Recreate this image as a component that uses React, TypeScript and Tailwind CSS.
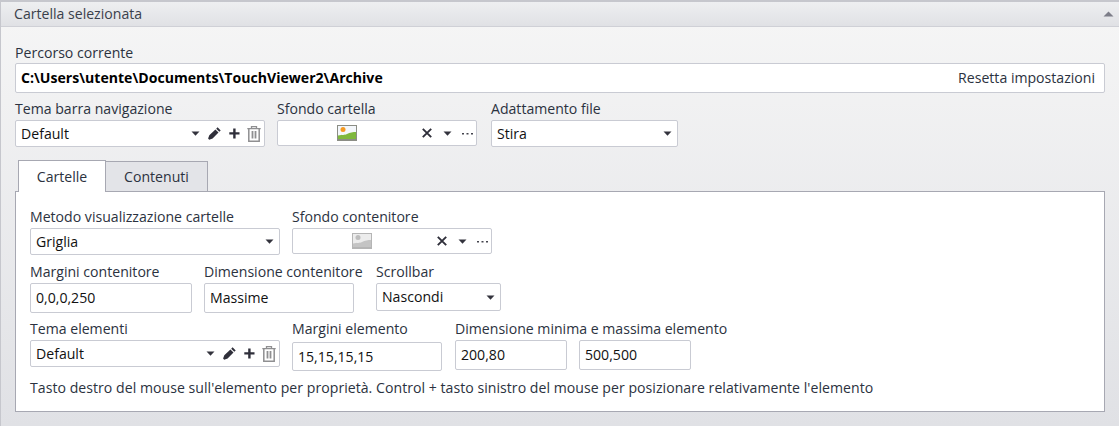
import React from "react";

const boxBorder = "border border-[#c9cbd3] rounded-[2px] bg-white";

const Caret = () => (
  <svg width="9" height="5" viewBox="0 0 9 5" className="shrink-0">
    <path d="M0.5 0.5h8L4.500 4.800z" fill="#33333d" />
  </svg>
);

const PencilIcon = () => (
  <svg width="13" height="13" viewBox="0 0 13 13" className="shrink-0">
    <path d="M9.600 0.300 12.700 3.400 11.300 4.800 8.200 1.700zM7.400 2.500l3.100 3.100-5.900 5.900-3.400 1.200-1.100-1.100 1.200-3.400z" fill="#2f2f3a" />
  </svg>
);

const PlusIcon = () => (
  <svg width="11" height="11" viewBox="0 0 11 11" className="shrink-0">
    <path d="M4.200 0.500h2.400v3.700h3.900v2.400H6.600v3.900H4.200V6.600H0.300V4.200h3.900z" fill="#2f2f3a" />
  </svg>
);

const TrashIcon = () => (
  <svg width="14" height="16" viewBox="0 0 14 16" className="shrink-0" fill="none" stroke="#8f8f91">
    <path d="M0.300 2.600h13.400M4.500 2.600V.7h5v1.900" strokeWidth="1.300" />
    <path d="M1.800 2.600v12.700h10.400V2.600" strokeWidth="1.500" />
    <path d="M5.500 5v7.500M8.500 5v7.500" strokeWidth="1.800" />
  </svg>
);

const CloseIcon = () => (
  <svg width="10" height="10" viewBox="0 0 10 10" className="shrink-0">
    <path d="M0.800 0.800l8.400 8.400M9.200 0.800L0.800 9.200" stroke="#2f2f3a" strokeWidth="1.900" />
  </svg>
);

const Dots = () => (
  <svg width="11" height="3" viewBox="0 0 11 3" className="shrink-0">
    <path d="M0 1h2v1.500H0zM4.500 1h2v1.500h-2zM9 1h2v1.500H9z" fill="#44444e" />
  </svg>
);

const Picture = ({ grey }: { grey?: boolean }) => (
  <svg width="20" height="16" viewBox="0 0 20 16" className="shrink-0">
    <rect x="0" y="0" width="20" height="16" fill={grey ? "#b5b5b5" : "#8b8d85"} />
    <rect x="1" y="1" width="18" height="13" fill={grey ? "#ececec" : "#f4f7fb"} />
    <circle cx="6" cy="4.500" r="2.500" fill={grey ? "#bdbdbd" : "#f59a23"} />
    <path d="M1 10.500c5-1 6 0 9-1.500 3-1.500 6-2 9-2V14H1z" fill={grey ? "#c4c4c4" : "#7fb83d"} />
  </svg>
);

const Field = ({ label, width, children }: { label: string; width: string; children: React.ReactNode }) => (
  <div className={`flex flex-col ${width}`}>
    <div className="h-[21px] leading-[20px] whitespace-nowrap">{label}</div>
    {children}
  </div>
);

const ThemeCombo = ({ value }: { value: string }) => (
  <div className={`${boxBorder} h-[27px] flex items-center pl-[5px] pr-[3px]`}>
    <span className="flex-1 text-[#111]">{value}</span>
    <Caret />
    <div className="w-[8px]" />
    <PencilIcon />
    <div className="w-[8px]" />
    <PlusIcon />
    <div className="w-[7px]" />
    <TrashIcon />
  </div>
);

const Combo = ({ value, h = "h-[27px]" }: { value: string; h?: string }) => (
  <div className={`${boxBorder} ${h} flex items-center pl-[5px] pr-[5px] border-[#b9bac4]`}>
    <span className="flex-1 text-[#111]">{value}</span>
    <Caret />
  </div>
);

const ImagePicker = ({ grey }: { grey?: boolean }) => (
  <div className={`${boxBorder} h-[26px] flex items-center`}>
    <div className="ml-[59px]">
      <Picture grey={grey} />
    </div>
    <div className="flex-1" />
    <CloseIcon />
    <div className="w-[11px]" />
    <Caret />
    <div className="w-[10px]" />
    <Dots />
    <div className="w-[3px]" />
  </div>
);

const Input = ({ value, h = "h-[30px]" }: { value: string; h?: string }) => (
  <div className={`${boxBorder} ${h} flex items-center pl-[5px] text-[#111]`}>{value}</div>
);

export default function App() {
  return (
    <div
      className="w-[1119px] h-[426px] overflow-hidden border-t-2 border-l border-[#c6c7cd] bg-gradient-to-b from-[#f6f6f6] to-[#e0e1e5] text-[14.100px] text-[#2b3240]"
      style={{ fontFamily: '"Open Sans", "Noto Sans", sans-serif' }}
    >
      <div className="h-[25px] flex items-center justify-between pl-[13px] pr-[5px] border-b border-[#cfd0d6] bg-gradient-to-b from-[#eeeff1] to-[#e0e1e5]">
        <span className="text-[#3a3f4b]">Cartella selezionata</span>
        <svg width="11" height="6" viewBox="0 0 11 6">
          <path d="M0.500 5.500 5.500 0.500 10.500 5.500z" fill="#7c7d88" />
        </svg>
      </div>

      <div className="pl-[14px] pr-[14px] pt-[16px]">
        <div className="h-[20px] leading-[20px]">Percorso corrente</div>
        <div className={`${boxBorder} h-[30px] flex items-center justify-between pl-[5px] pr-[9px]`}>
          <span className="font-bold text-black">C:\Users\utente\Documents\TouchViewer2\Archive</span>
          <span>Resetta impostazioni</span>
        </div>

        <div className="flex mt-[6px]">
          <Field label="Tema barra navigazione" width="w-[250px]">
            <ThemeCombo value="Default" />
          </Field>
          <div className="w-[12px]" />
          <Field label="Sfondo cartella" width="w-[200px]">
            <ImagePicker />
          </Field>
          <div className="w-[14px]" />
          <Field label="Adattamento file" width="w-[187px]">
            <Combo value="Stira" />
          </Field>
        </div>

        <div className="flex mt-[13px] pl-[3px] h-[32px] relative z-10">
          <div className="w-[88px] h-[32px] flex items-center justify-center bg-white border border-b-0 border-[#a7a8b2]">
            Cartelle
          </div>
          <div className="w-[102px] h-[30px] mt-[1px] flex items-center justify-center bg-[#e3e4e8] border border-l-0 border-b-0 border-[#a7a8b2]">
            Contenuti
          </div>
        </div>

        <div className="h-[221px] -mt-[1px] bg-white border border-[#a7a8b2] pl-[14px] pt-[15px]">
          <div className="flex">
            <Field label="Metodo visualizzazione cartelle" width="w-[250px]">
              <Combo value="Griglia" />
            </Field>
            <div className="w-[12px]" />
            <Field label="Sfondo contenitore" width="w-[200px]">
              <ImagePicker grey />
            </Field>
          </div>

          <div className="flex mt-[7px]">
            <Field label="Margini contenitore" width="w-[162px]">
              <Input value="0,0,0,250" />
            </Field>
            <div className="w-[12px]" />
            <Field label="Dimensione contenitore" width="w-[150px]">
              <Input value="Massime" />
            </Field>
            <div className="w-[22px]" />
            <Field label="Scrollbar" width="w-[125px]">
              <Combo value="Nascondi" h="h-[28px]" />
            </Field>
          </div>

          <div className="flex mt-[6px]">
            <Field label="Tema elementi" width="w-[250px]">
              <ThemeCombo value="Default" />
            </Field>
            <div className="w-[12px]" />
            <Field label="Margini elemento" width="w-[150px]">
              <div className="mt-[2px]">
                <Input value="15,15,15,15" h="h-[29px]" />
              </div>
            </Field>
            <div className="w-[13px]" />
            <Field label="Dimensione minima e massima elemento" width="w-[236px]">
              <div className="flex gap-[12px]">
                <div className="w-[112px]">
                  <Input value="200,80" />
                </div>
                <div className="w-[112px]">
                  <Input value="500,500" />
                </div>
              </div>
            </Field>
          </div>

          <div className="mt-[7px] leading-[20px] whitespace-nowrap tracking-[0.03px]">
            Tasto destro del mouse sull'elemento per proprietà. Control + tasto sinistro del mouse per posizionare relativamente l'elemento
          </div>
        </div>
      </div>
    </div>
  );
}
